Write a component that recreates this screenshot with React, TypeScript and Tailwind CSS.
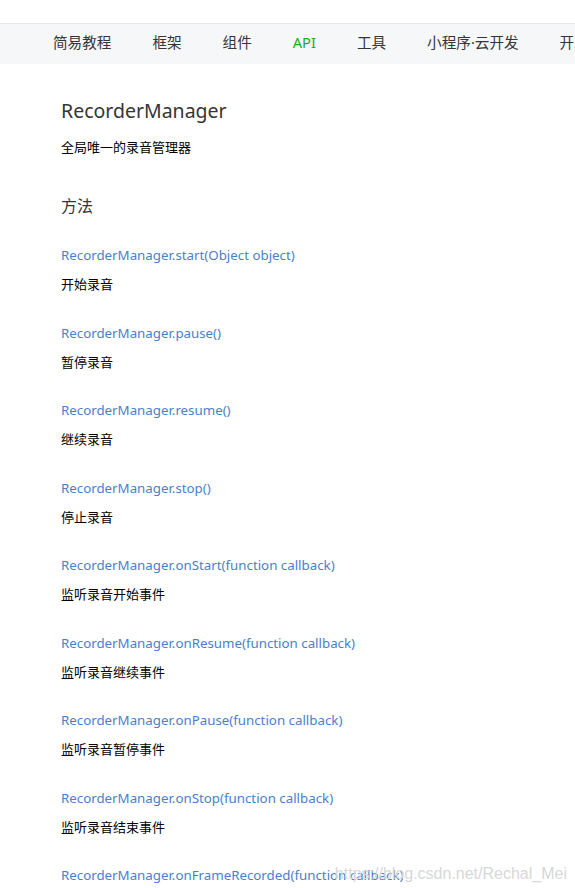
const font = { fontFamily: '"Noto Sans", "Noto Sans CJK SC", sans-serif' };

const navItems = ["简易教程", "框架", "组件", "API", "工具", "小程序·云开发", "开发者"];

const methods = [
  ["RecorderManager.start(Object object)", "开始录音"],
  ["RecorderManager.pause()", "暂停录音"],
  ["RecorderManager.resume()", "继续录音"],
  ["RecorderManager.stop()", "停止录音"],
  ["RecorderManager.onStart(function callback)", "监听录音开始事件"],
  ["RecorderManager.onResume(function callback)", "监听录音继续事件"],
  ["RecorderManager.onPause(function callback)", "监听录音暂停事件"],
  ["RecorderManager.onStop(function callback)", "监听录音结束事件"],
  ["RecorderManager.onFrameRecorded(function callback)", ""],
];

export default function App() {
  return (
    <div className="relative w-[575px] h-[888px] overflow-hidden bg-white" style={{ fontFamily: '"Noto Sans CJK SC", sans-serif' }}>
      <div className="h-[23px] bg-white" />
      <nav className="h-[41px] pb-[3px] pl-[53px] gap-[41px] bg-[#f6f7f9] border-t border-[#e7e8ea] flex items-center whitespace-nowrap text-[14.6px] text-[#353535]" style={font}>
        {navItems.map((n) => (
          <span key={n} className={`shrink-0 ${n === "API" ? "text-[#1aad19]" : ""}`}>
            {n}
          </span>
        ))}
      </nav>

      <main className="pl-[61px] pt-[33px]">
        <h1 className="text-[19.5px] leading-[28px] text-[#353535]" style={font}>RecorderManager</h1>
        <p className="mt-[12px] text-[13px] leading-[20px] text-[#000]">全局唯一的录音管理器</p>
        <h2 className="mt-[36px] text-[16px] leading-[24px] text-[#353535]">方法</h2>

        <div className="mt-[28px] flex flex-col gap-[28.5px]">
          {methods.map(([sig, desc]) => (
            <div key={sig} className="flex flex-col gap-[9px]">
              <a className="text-[13.3px] leading-[20px] text-[#4a7fcd] whitespace-nowrap" style={font}>{sig}</a>
              {desc && <p className="text-[13px] leading-[20px] text-[#000]">{desc}</p>}
            </div>
          ))}
        </div>
      </main>

      <div className="absolute right-[8px] top-[862px] text-[16px] text-[#d8d8d8] whitespace-nowrap" style={{ fontFamily: '"Liberation Sans", sans-serif' }}>
        https://blog.csdn.net/Rechal_Mei
      </div>
    </div>
  );
}
